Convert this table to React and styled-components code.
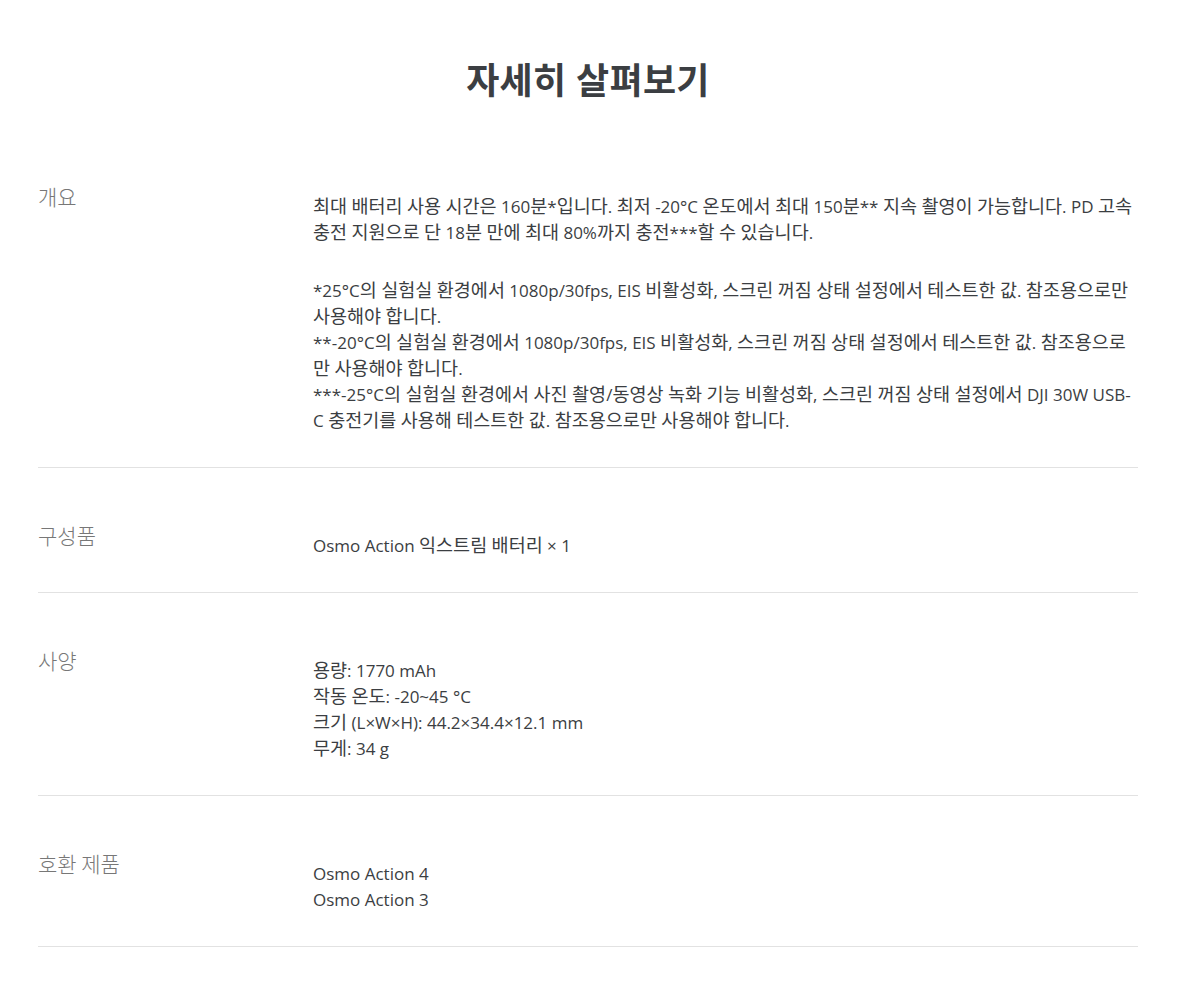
import React from "react";
import styled, { createGlobalStyle } from "styled-components";

const Global = createGlobalStyle`
  html, body { margin: 0; padding: 0; background: #fff; }
  body { font-family: "Open Sans", "Noto Sans CJK KR", sans-serif; }
`;

const Page = styled.div`
  width: 1100px;
  margin-left: 38px;
  padding-top: 57px;
`;

const Title = styled.h2`
  margin: 0 0 24px;
  text-align: center;
  font-size: 36px;
  line-height: 48px;
  font-weight: 700;
  color: #3b3e42;
  letter-spacing: 0.3px;
`;

const Row = styled.div`
  display: grid;
  grid-template-columns: 275px 1fr;
  padding: 54px 0 33px;
  border-bottom: 1px solid #e2e2e2;
`;

const Label = styled.div`
  font-family: "Noto Sans CJK KR", sans-serif;
  font-size: 21px;
  line-height: 26px;
  color: #777777;
  font-weight: 300;
`;

const Content = styled.div`
  padding-top: 11px;
  font-size: 17px;
  line-height: 26px;
  color: #3b3e42;
`;

const Ko = styled.span`
  font-family: "Noto Sans CJK KR", sans-serif;
  font-size: 1.09em;
  line-height: 1;
`;

const Para = styled.p`
  margin: 0;
  & + & { margin-top: 32px; }
`;

const Line = styled.div``;

function T({ children }) {
  const parts = String(children).split(/([\uAC00-\uD7A3]+)/);
  return (
    <>
      {parts.map((p, i) =>
        /[\uAC00-\uD7A3]/.test(p) ? <Ko key={i}>{p}</Ko> : <React.Fragment key={i}>{p}</React.Fragment>
      )}
    </>
  );
}

const rows = [
  {
    label: "개요",
    content: (
      <>
        <Para>
          <T>최대 배터리 사용 시간은 160분*입니다. 최저 -20°C 온도에서 최대 150분** 지속 촬영이 가능합니다. PD 고속 충전 지원으로 단 18분 만에 최대 80%까지 충전***할 수 있습니다.</T>
        </Para>
        <Para>
          <T>*25°C의 실험실 환경에서 1080p/30fps, EIS 비활성화, 스크린 꺼짐 상태 설정에서 테스트한 값. 참조용으로만 사용해야 합니다.</T>
          <br />
          <T>**-20°C의 실험실 환경에서 1080p/30fps, EIS 비활성화, 스크린 꺼짐 상태 설정에서 테스트한 값. 참조용으로만 사용해야 합니다.</T>
          <br />
          <T>***-25°C의 실험실 환경에서 사진 촬영/동영상 녹화 기능 비활성화, 스크린 꺼짐 상태 설정에서 DJI 30W USB-C 충전기를 사용해 테스트한 값. 참조용으로만 사용해야 합니다.</T>
        </Para>
      </>
    ),
  },
  { label: "구성품", content: <Line><T>Osmo Action 익스트림 배터리 × 1</T></Line> },
  {
    label: "사양",
    content: (
      <>
        <Line><T>용량: 1770 mAh</T></Line>
        <Line><T>작동 온도: -20~45 °C</T></Line>
        <Line><T>크기 (L×W×H): 44.2×34.4×12.1 mm</T></Line>
        <Line><T>무게: 34 g</T></Line>
      </>
    ),
  },
  {
    label: "호환 제품",
    content: (
      <>
        <Line>Osmo Action 4</Line>
        <Line>Osmo Action 3</Line>
      </>
    ),
  },
];

export default function App() {
  return (
    <>
      <Global />
      <Page>
        <Title>자세히 살펴보기</Title>
        {rows.map((r) => (
          <Row key={r.label}>
            <Label>{r.label}</Label>
            <Content>{r.content}</Content>
          </Row>
        ))}
      </Page>
    </>
  );
}
